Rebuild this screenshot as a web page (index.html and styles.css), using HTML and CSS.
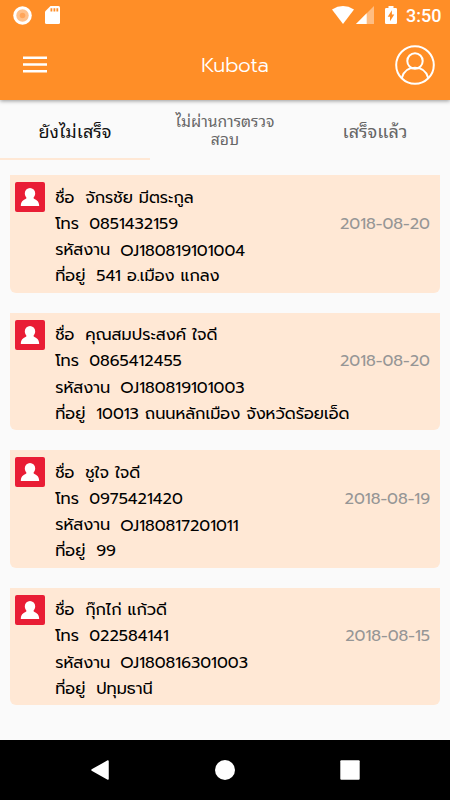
FILE: index.html
```html
<!DOCTYPE html>
<html lang="th">
<head>
<meta charset="utf-8">
<title>Kubota</title>
<link rel="stylesheet" href="styles.css">
</head>
<body>
<header class="header">
  <div class="status">
    <svg class="status-icon" width="19" height="19" viewBox="0 0 19 19"><circle cx="9.5" cy="9.5" r="9.3" fill="#fff"/><circle cx="9.5" cy="9.5" r="6.2" fill="#ffc08a"/><circle cx="9.5" cy="9.5" r="2.8" fill="#ffa55a"/></svg>
    <svg class="sd" width="15" height="18" viewBox="0 0 15 18"><path d="M5.5 0H13.5Q15 0 15 1.5V16.5Q15 18 13.5 18H1.500Q0 18 0 16.500V5.500Z" fill="#fff"/><path d="M5.500 2.200H7.300V5.500H5.500ZM8.500 2.200H10.300V5.500H8.500ZM11.400 2.200H13.200V5.500H11.400Z" fill="#ff8e27"/></svg>
    <div class="status-right">
      <svg width="22" height="18" viewBox="0 0 22 18"><path d="M0 3.400Q11-3.400 22 3.400L11 18Z" fill="#fff"/></svg>
      <svg class="signal" width="18" height="18" viewBox="0 0 18 18"><path d="M18 0V18H0Z" fill="#ffbd82"/><path d="M10.700 7.300V18H0Z" fill="#fff"/></svg>
      <svg class="battery" width="12" height="18" viewBox="0 0 12 18"><path d="M3.500 0H8.500V2H10.800Q12 2 12 3.200V16.800Q12 18 10.800 18H1.200Q0 18 0 16.800V3.200Q0 2 1.200 2H3.500Z" fill="#fff"/><path d="M6.900 4.300V8.500H9.300L5 15.300V10.800H2.700Z" fill="#ff8e27"/></svg>
      <span class="clock">3:50</span>
    </div>
  </div>
  <div class="toolbar">
    <svg width="24" height="18" viewBox="0 0 24 18"><path d="M0 1.700H24M0 8.500H24M0 15.300H24" stroke="#fff" stroke-width="2.400"/></svg>
    <h1 class="title">Kubota</h1>
    <svg width="40" height="40" viewBox="0 0 40 40" fill="none" stroke="#fff" stroke-width="2"><circle cx="20" cy="20" r="18.800"/><circle cx="20" cy="16" r="7.700"/><path d="M6.800 33C8.500 26.500 13.500 22.800 20 22.800S31.500 26.500 33.200 33"/></svg>
  </div>
</header>
<nav class="tabs">
  <div class="tab active"><span>ยังไม่เสร็จ</span></div>
  <div class="tab small"><span>ไม่ผ่านการตรวจ<br>สอบ</span></div>
  <div class="tab"><span>เสร็จแล้ว</span></div>
</nav>
<main class="list">
  <article class="card">
    <svg class="avatar" viewBox="0 0 30 30"><rect width="30" height="30" rx="2" fill="#e91d35"/><path d="M9.800 11.200A5.200 5.200 0 0 1 20.200 11.200C20.200 13.500 19.200 14.800 18.400 16C20 18 24.200 18 24.200 24H5.800C5.800 18 10 18 11.600 16C10.800 14.800 9.800 13.500 9.800 11.200Z" fill="#fff"/></svg>
    <div class="info">
      <p><span class="name">ชื่อ</span><span>จักรชัย มีตระกูล</span></p>
      <p><span class="tel">โทร</span><span class="num">0851432159</span></p>
      <p><span class="job">รหัสงาน</span><span class="code">OJ180819101004</span></p>
      <p><span class="addr">ที่อยู่</span><span>541 อ.เมือง แกลง</span></p>
    </div>
    <time class="date">2018-08-20</time>
  </article>
  <article class="card">
    <svg class="avatar" viewBox="0 0 30 30"><rect width="30" height="30" rx="2" fill="#e91d35"/><path d="M9.800 11.200A5.200 5.200 0 0 1 20.200 11.200C20.200 13.500 19.200 14.800 18.400 16C20 18 24.200 18 24.200 24H5.800C5.800 18 10 18 11.600 16C10.800 14.800 9.800 13.500 9.800 11.200Z" fill="#fff"/></svg>
    <div class="info">
      <p><span class="name">ชื่อ</span><span>คุณสมประสงค์ ใจดี</span></p>
      <p><span class="tel">โทร</span><span class="num">0865412455</span></p>
      <p><span class="job">รหัสงาน</span><span class="code">OJ180819101003</span></p>
      <p><span class="addr">ที่อยู่</span><span>10013 ถนนหลักเมือง จังหวัดร้อยเอ็ด</span></p>
    </div>
    <time class="date">2018-08-20</time>
  </article>
  <article class="card">
    <svg class="avatar" viewBox="0 0 30 30"><rect width="30" height="30" rx="2" fill="#e91d35"/><path d="M9.800 11.200A5.200 5.200 0 0 1 20.200 11.200C20.200 13.500 19.200 14.800 18.400 16C20 18 24.200 18 24.200 24H5.800C5.800 18 10 18 11.600 16C10.800 14.800 9.800 13.500 9.800 11.200Z" fill="#fff"/></svg>
    <div class="info">
      <p><span class="name">ชื่อ</span><span>ชูใจ ใจดี</span></p>
      <p><span class="tel">โทร</span><span class="num">0975421420</span></p>
      <p><span class="job">รหัสงาน</span><span class="code">OJ180817201011</span></p>
      <p><span class="addr">ที่อยู่</span><span>99</span></p>
    </div>
    <time class="date">2018-08-19</time>
  </article>
  <article class="card">
    <svg class="avatar" viewBox="0 0 30 30"><rect width="30" height="30" rx="2" fill="#e91d35"/><path d="M9.800 11.200A5.200 5.200 0 0 1 20.200 11.200C20.200 13.500 19.200 14.800 18.400 16C20 18 24.200 18 24.200 24H5.800C5.800 18 10 18 11.600 16C10.800 14.800 9.800 13.500 9.800 11.200Z" fill="#fff"/></svg>
    <div class="info">
      <p><span class="name">ชื่อ</span><span>กุ๊กไก่ แก้วดี</span></p>
      <p><span class="tel">โทร</span><span class="num">022584141</span></p>
      <p><span class="job">รหัสงาน</span><span class="code">OJ180816301003</span></p>
      <p><span class="addr">ที่อยู่</span><span>ปทุมธานี</span></p>
    </div>
    <time class="date">2018-08-15</time>
  </article>
</main>
<footer class="navbar">
  <svg width="20" height="20" viewBox="0 0 20 20"><path d="M18 1V19L2 10Z" fill="#fff" stroke="#fff" stroke-width="1.500" stroke-linejoin="round"/></svg>
  <svg width="20" height="20" viewBox="0 0 20 20"><circle cx="10" cy="10" r="10" fill="#fff"/></svg>
  <svg width="20" height="20" viewBox="0 0 20 20"><rect x=".3" y=".3" width="19.400" height="19.400" rx="1" fill="#fff"/></svg>
</footer>
</body>
</html>
```
FILE: styles.css
```css
* { box-sizing: border-box; }
body {
  margin: 0;
  width: 450px;
  height: 800px;
  display: flex;
  flex-direction: column;
  overflow: hidden;
  background: #fafafa;
  color: #000;
  font-family: Prompt, Lato, "Noto Sans Thai", "Noto Sans", sans-serif;
  font-weight: 300;
}
svg { display: block; flex: none; }
.header {
  height: 100px;
  flex: none;
  background: #ff8e27;
  color: #fff;
  box-shadow: 0 1px 4px rgba(0, 0, 0, .4);
}
.status { height: 30px; display: flex; align-items: flex-start; padding: 6px 9px 0 13px; }
.sd { margin-left: 13px; }
.status-right { margin-left: auto; display: flex; }
.signal { margin-left: 2px; }
.battery { margin-left: 11px; }
.clock { margin-left: 9px; width: 35px; font: 500 18px/20px Roboto, sans-serif; }
.toolbar { height: 70px; display: flex; align-items: center; justify-content: space-between; padding: 0 15px 0 23px; }
.title { margin: 0 0 0 28px; font-size: 20.200px; font-weight: 300; }
.tabs { height: 60px; flex: none; display: grid; grid-template-columns: repeat(3, 1fr); font-family: "Noto Looped Thai", "Noto Sans Thai Looped", Sarabun, Loma, Garuda, Waree, "Noto Sans Thai", sans-serif; }
.tab {
  display: flex;
  align-items: center;
  justify-content: center;
  text-align: center;
  color: #666;
  font-size: 18.100px;
  font-weight: 400;
  border-bottom: 2px solid transparent;
}
.tab.active { color: #111; border-color: #ffe8d5; }
.tab.small { font-size: 15.700px; line-height: 18px; }
.list { flex: 1; padding: 15px 10px 0; display: flex; flex-direction: column; gap: 20px; }
.card {
  height: 117.5px;
  display: flex;
  padding: 7px 10px 0 5px;
  background: #ffe8d5;
  border-radius: 0 0 6px 6px;
}
.avatar { width: 30px; height: 30px; }
.info { margin-left: 10.2px; padding-top: .6px; flex: 1; min-width: 0; font-size: 16.150px; font-weight: 400; }
.info p { margin: 0; height: 26.3px; line-height: 30px; display: flex; white-space: nowrap; }
.info span { flex: none; }
.name { width: 30px; }
.tel { width: 34px; }
.job { width: 65px; }
.addr { width: 41px; }
.info .code { padding-top: .5px; }
.date { margin-top: 26.6px; font-size: 16.2px; font-weight: 400; line-height: 30px; color: #969696; white-space: nowrap; }
.navbar { height: 60px; flex: none; background: #000; display: flex; justify-content: space-between; align-items: center; padding: 0 90px; }
```
